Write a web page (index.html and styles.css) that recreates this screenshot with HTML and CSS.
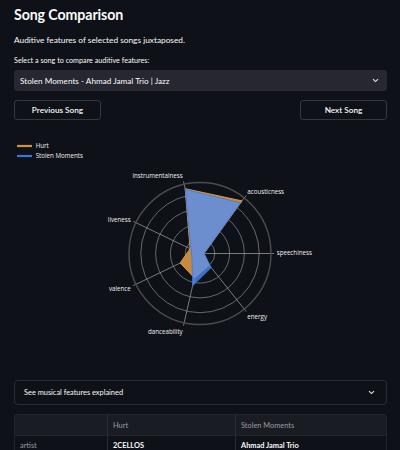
FILE: index.html
```html
<!DOCTYPE html>
<html lang="en">
<head>
<meta charset="utf-8">
<title>Song Comparison</title>
<link rel="stylesheet" href="styles.css">
</head>
<body>
<main class="main">
  <h1 class="title">Song Comparison</h1>
  <p class="subtitle">Auditive features of selected songs juxtaposed.</p>
  <label class="field-label">Select a song to compare auditive features:</label>
  <div class="select">
    <span>Stolen Moments - Ahmad Jamal Trio | Jazz</span>
    <svg class="chev" width="7" height="5" viewBox="0 0 7 5"><path d="M1 1.2 L3.5 3.6 L6 1.2" fill="none" stroke="#e6e6e6" stroke-width="1.1"/></svg>
  </div>
  <div class="btn-row">
    <button class="btn">Previous Song</button>
    <button class="btn">Next Song</button>
  </div>

  <svg class="chart" width="373" height="248" viewBox="0 0 373 248">
    <g class="legend">
      <line x1="3" y1="20" x2="18" y2="20" stroke="#d3913c" stroke-width="2.2"/>
      <text x="21.7" y="22.2">Hurt</text>
      <line x1="3" y1="30" x2="18" y2="30" stroke="#3a74d6" stroke-width="2.2"/>
      <text x="21.7" y="32.2">Stolen Moments</text>
    </g>
    <g transform="translate(186,127.5)">
      <circle r="14.8" class="ring"/>
      <circle r="29.6" class="ring"/>
      <circle r="44.4" class="ring"/>
      <circle r="59.2" class="ring"/>
      <g class="spoke">
        <line x1="0" y1="0" x2="74" y2="0"/>
        <line x1="0" y1="0" x2="46.1" y2="-57.9"/>
        <line x1="0" y1="0" x2="-16.5" y2="-72.1"/>
        <line x1="0" y1="0" x2="-66.7" y2="-32.1"/>
        <line x1="0" y1="0" x2="-66.7" y2="32.1"/>
        <line x1="0" y1="0" x2="-16.5" y2="72.1"/>
        <line x1="0" y1="0" x2="46.1" y2="57.9"/>
      </g>
      <circle r="71" class="outer"/>
      <polygon class="hurt" points="4,0 42,-52.6 -14.8,-64.8 -9.9,-4.8 -19.8,9.5 -5.6,24.4 9.4,11.7"/>
      <polygon class="stolen" points="4,0 40.4,-50.6 -14.7,-64.2 -9,-4.3 -8.1,3.9 -7.3,32.2 11.2,14.1"/>
    </g>
    <g class="axis-label">
      <text x="168.7" y="51.8" text-anchor="end">instrumentalness</text>
      <text x="233.3" y="68.2">acousticness</text>
      <text x="116.7" y="95.5" text-anchor="end">liveness</text>
      <text x="262.7" y="129.2">speechiness</text>
      <text x="116.7" y="164.8" text-anchor="end">valence</text>
      <text x="168.7" y="208.2" text-anchor="end">danceability</text>
      <text x="233.3" y="193.2">energy</text>
    </g>
  </svg>

  <div class="expander">
    <span>See musical features explained</span>
    <svg class="chev" width="7" height="5" viewBox="0 0 7 5"><path d="M1 1.2 L3.5 3.6 L6 1.2" fill="none" stroke="#e6e6e6" stroke-width="1.1"/></svg>
  </div>

  <div class="table">
    <div class="row head">
      <div class="cell c1"></div>
      <div class="cell c2">Hurt</div>
      <div class="cell c3">Stolen Moments</div>
    </div>
    <div class="row">
      <div class="cell c1 idx">artist</div>
      <div class="cell c2 val">2CELLOS</div>
      <div class="cell c3 val">Ahmad Jamal Trio</div>
    </div>
  </div>
</main>
</body>
</html>
```

FILE: styles.css
```css
html, body {
  margin: 0;
  padding: 0;
  background: #0e1117;
  color: #fafafa;
  font-family: Lato, "Open Sans", sans-serif;
  overflow: hidden;
}
.main {
  width: 373px;
  margin-left: 14px;
  height: 450px;
}
.title {
  margin: 0;
  height: 30px;
  line-height: 30px;
  font-size: 14.2px;
  font-weight: 700;
  letter-spacing: -0.1px;
}
.subtitle {
  margin: 2px 0 0;
  height: 16px;
  line-height: 16px;
  font-size: 8.3px;
}
.field-label {
  display: block;
  margin-top: 7px;
  height: 12px;
  line-height: 12px;
  font-size: 7.2px;
}
.select {
  margin-top: 3px;
  height: 21px;
  background: #262730;
  border-radius: 3px;
  display: flex;
  align-items: center;
  justify-content: space-between;
  padding: 0 8px 0 6px;
  box-sizing: border-box;
  font-size: 8.2px;
}
.chev { display: block; }
.btn-row {
  margin-top: 9px;
  display: flex;
  justify-content: space-between;
}
.btn {
  width: 87px;
  height: 20px;
  background: #0e1117;
  border: 1px solid #363841;
  border-radius: 3px;
  color: #fafafa;
  font-family: Lato, "Open Sans", sans-serif;
  font-size: 8.2px;
  font-weight: 600;
  padding: 0;
}
.chart {
  display: block;
  margin-top: 6px;
}
.legend text, .axis-label text {
  font-family: "Open Sans", sans-serif;
  font-size: 6.2px;
  fill: #f0f0f0;
}
.ring {
  fill: none;
  stroke: #8c8c8c;
  stroke-width: 0.7;
}
.outer {
  fill: none;
  stroke: #4d4d4d;
  stroke-width: 1.4;
}
.spoke line {
  stroke: #a8a8a8;
  stroke-width: 0.7;
}
.hurt {
  fill: #c88b3d;
  stroke: #dc9a40;
  stroke-width: 1;
}
.stolen {
  fill: rgba(80, 143, 253, 0.76);
  stroke: #3c78dc;
  stroke-width: 0.8;
}
.expander {
  margin-top: 6px;
  height: 25px;
  border: 1px solid #2b2d35;
  border-radius: 4px;
  box-sizing: border-box;
  display: flex;
  align-items: center;
  justify-content: space-between;
  padding: 0 11px 0 9px;
  font-size: 7.4px;
}
.table {
  margin-top: 9px;
  border: 1px solid #23252d;
  border-bottom: none;
  border-radius: 4px 4px 0 0;
  overflow: hidden;
  font-size: 7.4px;
}
.row {
  display: flex;
  height: 20px;
  align-items: stretch;
}
.row.head {
  background: #1a1c23;
  color: #9a9ba1;
}
.cell {
  display: flex;
  align-items: center;
  box-sizing: border-box;
  padding-left: 5px;
}
.c1 { width: 93px; border-right: 1px solid #2a2c34; }
.c2 { width: 128px; border-right: 1px solid #2a2c34; }
.c3 { flex: 1; }
.row + .row { border-top: 1px solid #23252d; height: 19px; }
.idx { color: #9a9ba1; }
.val { font-weight: 700; color: #fafafa; }
```
